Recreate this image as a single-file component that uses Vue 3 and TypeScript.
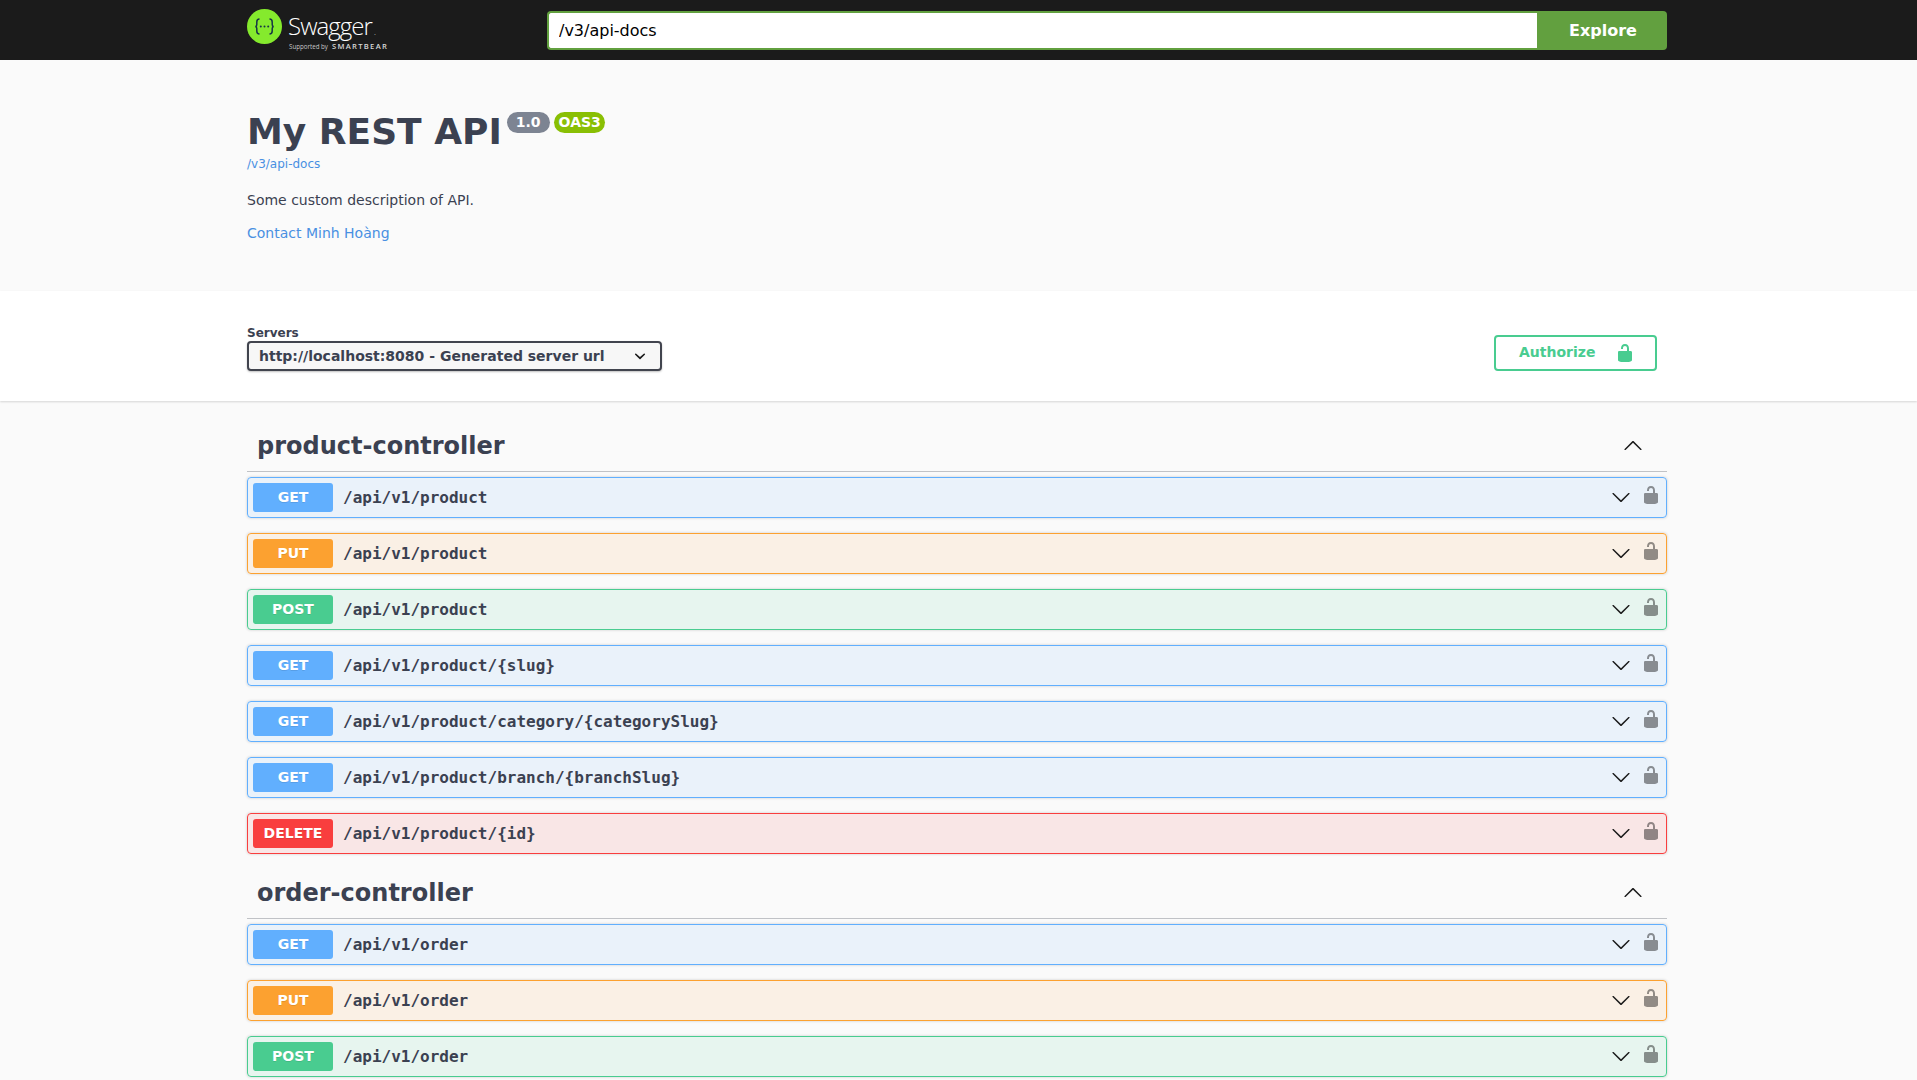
<script setup lang="ts">
interface Op { method: 'get' | 'put' | 'post' | 'delete'; path: string }
interface Tag { name: string; ops: Op[] }

const tags: Tag[] = [
  {
    name: 'product-controller',
    ops: [
      { method: 'get', path: '/api/v1/product' },
      { method: 'put', path: '/api/v1/product' },
      { method: 'post', path: '/api/v1/product' },
      { method: 'get', path: '/api/v1/product/{slug}' },
      { method: 'get', path: '/api/v1/product/category/{categorySlug}' },
      { method: 'get', path: '/api/v1/product/branch/{branchSlug}' },
      { method: 'delete', path: '/api/v1/product/{id}' },
    ],
  },
  {
    name: 'order-controller',
    ops: [
      { method: 'get', path: '/api/v1/order' },
      { method: 'put', path: '/api/v1/order' },
      { method: 'post', path: '/api/v1/order' },
    ],
  },
]

const lockPath =
  'M15.8 8H14V5.6C14 2.703 12.665 1 10 1 7.334 1 6 2.703 6 5.6V6h2v-.801C8 3.754 8.797 3 10 3c1.203 0 2 .754 2 2.199V8H4c-.553 0-1 .646-1 1.199V17c0 .549.428 1.139.951 1.307l1.197.387C5.672 18.861 6.55 19 7.1 19h5.8c.549 0 1.428-.139 1.951-.307l1.196-.387c.524-.167.953-.757.953-1.306V9.199C17 8.646 16.352 8 15.8 8z'
const arrowPath =
  'M17.418 6.109c.272-.268.709-.268.979 0s.271.701 0 .969l-7.908 7.83c-.27.268-.707.268-.979 0l-7.908-7.83c-.27-.268-.27-.701 0-.969.271-.268.709-.268.979 0L10 13.25l7.418-7.141z'
</script>

<template>
  <div class="page">
    <header class="topbar">
      <div class="wrap topbar-inner">
        <div class="logo">
          <svg class="logo-mark" viewBox="0 0 35 35" width="35" height="35">
            <circle cx="17.5" cy="17.5" r="17.5" fill="#85ea2d" />
            <path d="M12.5 10c-2.2 0-2.7 1.2-2.7 3v2.4c0 1.2-.5 1.9-1.4 2.1.9.2 1.4.9 1.4 2.1V22c0 1.8.5 3 2.7 3M22.5 10c2.2 0 2.7 1.2 2.7 3v2.4c0 1.2.5 1.9 1.4 2.1-.9.2-1.4.9-1.4 2.1V22c0 1.8-.5 3-2.7 3" fill="none" stroke="#173646" stroke-width="1.5" />
            <circle cx="13.8" cy="17.6" r="1" fill="#173646" />
            <circle cx="17.5" cy="17.6" r="1" fill="#173646" />
            <circle cx="21.2" cy="17.6" r="1" fill="#173646" />
          </svg>
          <div class="logo-text">
            <div class="logo-name">Swagger<span class="logo-dot">.</span></div>
            <div class="logo-sub"><span class="logo-by">Supported by</span><span class="logo-bear">SMARTBEAR</span></div>
          </div>
        </div>
        <form class="search" @submit.prevent>
          <input class="search-input" type="text" value="/v3/api-docs" />
          <button class="search-btn" type="button">Explore</button>
        </form>
      </div>
    </header>

    <section class="wrap info">
      <div class="title-row">
        <h1 class="title">My REST API</h1>
        <span class="stamp version">1.0</span>
        <span class="stamp oas">OAS3</span>
      </div>
      <a class="url" href="#">/v3/api-docs</a>
      <p class="desc">Some custom description of API.</p>
      <a class="contact" href="#">Contact Minh Hoàng</a>
    </section>

    <section class="schemes">
      <div class="wrap schemes-inner">
        <div class="servers">
          <span class="servers-label">Servers</span>
          <div class="select">
            <span>http://localhost:8080 - Generated server url</span>
            <svg class="select-chev" viewBox="0 0 20 20" width="22" height="22">
              <path d="M13.418 7.859a.695.695 0 0 1 .978 0 .68.68 0 0 1 0 .969l-3.908 3.83a.697.697 0 0 1-.979 0l-3.908-3.83a.68.68 0 0 1 0-.969.695.695 0 0 1 .978 0L10 11l3.418-3.141z" fill="#1b1b1b" />
            </svg>
          </div>
        </div>
        <button class="authorize" type="button">
          <span class="authorize-label">Authorize</span>
          <svg viewBox="0 0 20 20" width="20" height="20"><path :d="lockPath" fill="#49cc90" /></svg>
        </button>
      </div>
    </section>

    <main class="wrap ops">
      <section v-for="tag in tags" :key="tag.name" class="tag">
        <div class="tag-head">
          <h3 class="tag-name">{{ tag.name }}</h3>
          <svg class="tag-arrow" viewBox="0 0 20 20" width="20" height="20"><path :d="arrowPath" /></svg>
        </div>
        <div v-for="op in tag.ops" :key="op.method + op.path" class="op" :class="op.method">
          <span class="method">{{ op.method.toUpperCase() }}</span>
          <span class="path">{{ op.path }}</span>
          <svg class="op-arrow" viewBox="0 0 20 20" width="20" height="20"><path :d="arrowPath" /></svg>
          <svg class="op-lock" viewBox="0 0 20 20" width="20" height="20"><path :d="lockPath" /></svg>
        </div>
      </section>
    </main>
  </div>
</template>

<style>
html, body { margin: 0; background: #fafafa; overflow: hidden; }
</style>

<style scoped>
.page {
  height: 1080px;
  overflow: hidden;
  font-family: "DejaVu Sans", sans-serif;
  color: #3b4151;
  background: #fafafa;
}
.wrap { width: 1420px; margin-left: 247px; }

.topbar { background: #1b1b1b; height: 60px; padding: 10px 0 10px; box-sizing: border-box; }
.topbar-inner { display: flex; align-items: flex-start; }
.logo { width: 300px; height: 40px; display: flex; gap: 6px; margin-top: -1px; }
.logo-text { color: #fff; }
.logo-name { font-family: "Open Sans", sans-serif; font-weight: 300; font-size: 24px; line-height: 30px; letter-spacing: -0.95px; margin-top: 2px; }
.logo-dot { font-size: 8px; margin-left: 2px; }
.logo-sub { display: flex; align-items: baseline; gap: 4px; margin-top: -5px; margin-left: 1px; line-height: 9px; }
.logo-by { font-family: "Open Sans", sans-serif; font-size: 6.2px; color: #c8c8c8; }
.logo-bear { font-family: "Open Sans", sans-serif; font-size: 7.6px; font-weight: 600; letter-spacing: 1.3px; color: #d8d8d8; }
.search { flex: 1; display: flex; height: 39px; margin-top: 1px; }
.search-input {
  flex: 1;
  min-width: 0;
  box-sizing: border-box;
  height: 39px;
  border: 2px solid #62a03f;
  border-right: none;
  border-radius: 4px 0 0 4px;
  outline: none;
  padding: 8px 10px;
  font-family: "DejaVu Sans", sans-serif;
  font-size: 16px;
  color: #000;
  background: #fff;
}
.search-btn {
  width: 130px;
  height: 39px;
  border: none;
  border-radius: 0 4px 4px 0;
  background: #62a03f;
  color: #fff;
  font-family: "DejaVu Sans", sans-serif;
  font-size: 16px;
  font-weight: 700;
  padding: 0 0 0 2px;
}

.info { height: 231px; padding-top: 50px; box-sizing: border-box; }
.title-row { display: flex; align-items: flex-start; height: 44px; }
.title { margin: 0; font-size: 36px; font-weight: 700; line-height: 44px; color: #3b4151; }
.stamp { color: #fff; font-weight: 700; border-radius: 57px; display: inline-block; margin-top: 2px; height: 21px; box-sizing: border-box; font-size: 14px; line-height: 17px; padding-top: 2px; padding-bottom: 2px; }
.version { background: #7d8492; padding-left: 9px; padding-right: 9px; margin-left: 5px; }
.oas { background: #89bf04; padding-left: 4.5px; padding-right: 4.5px; margin-left: 4.5px; }
.url { display: block; font-size: 12px; line-height: 14px; color: #4990e2; text-decoration: none; margin-top: 3px; }
.desc { margin: 21px 0 0; font-size: 14px; line-height: 17px; color: #3b4151; }
.contact { display: block; margin-top: 16px; font-size: 14px; line-height: 17px; color: #4990e2; text-decoration: none; }

.schemes { background: #fff; height: 110px; padding: 30px 0; box-sizing: border-box; box-shadow: 0 1px 2px 0 rgba(0, 0, 0, 0.15); }
.schemes-inner { display: flex; justify-content: space-between; align-items: flex-end; height: 50px; }
.servers { display: flex; flex-direction: column; }
.servers-label { font-size: 12px; font-weight: 700; line-height: 14px; margin-bottom: 1px; margin-top: 5px; }
.select {
  box-sizing: border-box;
  width: 415px;
  height: 30px;
  border: 2px solid #41444e;
  border-radius: 4px;
  background: #f7f7f7;
  box-shadow: 0 1px 2px 0 rgba(0, 0, 0, 0.25);
  padding: 0 10px;
  display: flex;
  align-items: center;
  justify-content: space-between;
  font-size: 14px;
  font-weight: 700;
}
.select-chev { margin-right: -1px; }
.authorize {
  box-sizing: border-box;
  width: 163px;
  height: 36px;
  margin-right: 10px;
  padding: 0 20px 0 23px;
  background: transparent;
  border: 2px solid #49cc90;
  border-radius: 4px;
  color: #49cc90;
  font-family: "DejaVu Sans", sans-serif;
  font-size: 14px;
  font-weight: 700;
  display: flex;
  align-items: center;
  justify-content: space-between;
}
.authorize-label { margin-top: -2px; }

.ops { padding-top: 21px; }
.tag-head {
  box-sizing: border-box;
  height: 50px;
  padding: 0 24px 0 10px;
  border-bottom: 1px solid rgba(59, 65, 81, 0.3);
  display: flex;
  align-items: center;
  justify-content: space-between;
  margin-bottom: 5px;
}
.tag-name { margin: 0; font-size: 24px; font-weight: 700; line-height: 29px; color: #3b4151; }
.tag-arrow { transform: rotate(180deg); fill: #1b1b1b; margin-top: -2px; }
.op {
  box-sizing: border-box;
  height: 41px;
  margin-bottom: 15px;
  padding: 5px;
  border: 1px solid;
  border-radius: 4px;
  box-shadow: 0 0 3px rgba(0, 0, 0, 0.19);
  display: flex;
  align-items: center;
}
.method {
  width: 80px;
  height: 29px;
  line-height: 29px;
  border-radius: 3px;
  text-align: center;
  color: #fff;
  font-size: 14px;
  font-weight: 700;
  flex: none;
  text-shadow: 0 1px 0 rgba(0, 0, 0, 0.1);
}
.path {
  flex: 1;
  padding: 0 10px;
  font-family: "DejaVu Sans Mono", monospace;
  font-size: 16px;
  font-weight: 700;
  color: #3b4151;
}
.op-arrow { fill: #1b1b1b; margin-right: 10px; margin-top: -1px; }
.op-lock { fill: rgba(0, 0, 0, 0.42); margin-top: -5px; }

.get { background: rgba(97, 175, 254, 0.1); border-color: #61affe; }
.get .method { background: #61affe; }
.put { background: rgba(252, 161, 48, 0.1); border-color: #fca130; }
.put .method { background: #fca130; }
.post { background: rgba(73, 204, 144, 0.1); border-color: #49cc90; }
.post .method { background: #49cc90; }
.delete { background: rgba(249, 62, 62, 0.1); border-color: #f93e3e; }
.delete .method { background: #f93e3e; }
</style>
